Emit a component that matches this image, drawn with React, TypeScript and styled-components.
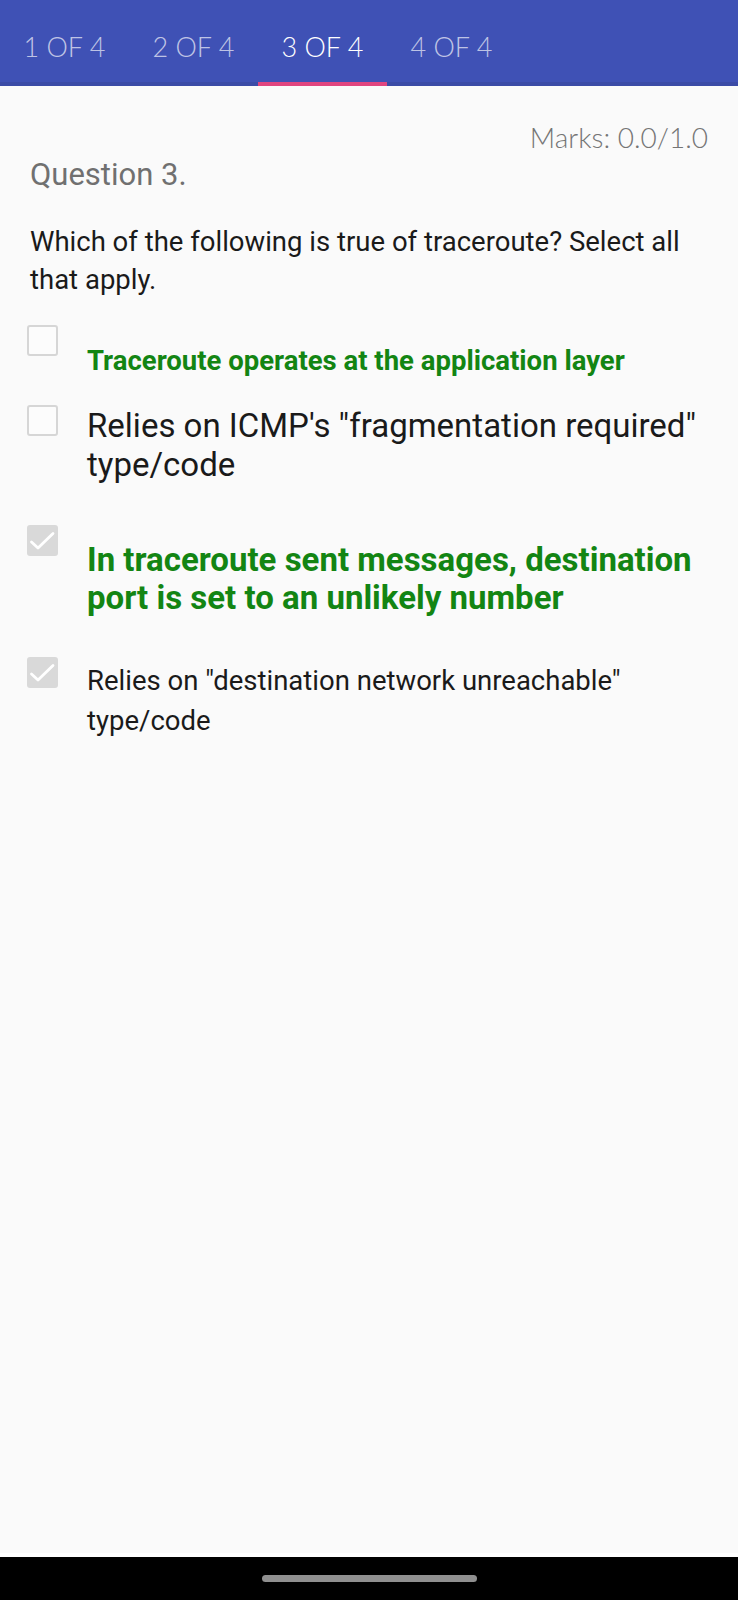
import React from "react";
import styled, { createGlobalStyle } from "styled-components";

const Global = createGlobalStyle`
  html, body { margin: 0; padding: 0; }
  body { background: #fafafa; font-family: Roboto, "Liberation Sans", sans-serif; }
  * { box-sizing: border-box; }
`;

const Page = styled.div`
  min-height: 100vh;
  display: flex;
  flex-direction: column;
  background: #fafafa;
`;

const Header = styled.header`
  height: 86px;
  background: #3f51b5;
  border-bottom: 4px solid #3b4ba6;
  display: flex;
  position: relative;
`;

const Tab = styled.div<{ $active?: boolean }>`
  width: 129px;
  display: flex;
  justify-content: center;
  align-items: center;
  padding-top: 10px;
  font-family: Lato, "Open Sans", sans-serif;
  font-weight: 300;
  font-size: 27px;
  color: ${(p) => (p.$active ? "#ffffff" : "rgba(255,255,255,0.68)")};
  position: relative;
`;

const Indicator = styled.span`
  position: absolute;
  left: 0;
  right: 0;
  bottom: -4px;
  height: 4px;
  background: #e0457f;
`;

const Content = styled.main`
  flex: 1;
  padding: 0 30px;
`;

const Marks = styled.div`
  margin-top: 34px;
  text-align: right;
  font-family: Lato, "Open Sans", sans-serif;
  font-weight: 300;
  font-size: 28px;
  line-height: 34px;
  color: #757575;
`;

const QuestionNo = styled.div`
  margin-top: 4px;
  font-size: 31px;
  line-height: 34px;
  color: #707070;
`;

const QuestionText = styled.div`
  margin-top: 31px;
  font-size: 27.5px;
  line-height: 38px;
  color: #1a1a1a;
`;

const Option = styled.div<{ $mt: number }>`
  display: flex;
  align-items: flex-start;
  margin-top: ${(p) => p.$mt}px;
`;

const Box = styled.div<{ $checked?: boolean }>`
  flex: none;
  width: 31px;
  height: 31px;
  margin-left: -3px;
  border-radius: 3px;
  border: ${(p) => (p.$checked ? "none" : "2px solid #d6d6d6")};
  background: ${(p) => (p.$checked ? "#d9d9d9" : "#fcfcfc")};
  display: flex;
  align-items: center;
  justify-content: center;
`;

const Label = styled.div<{ $pt: number; $size: number; $lh: number; $correct?: boolean }>`
  flex: 1;
  margin-left: 29px;
  margin-right: -24px;
  padding-top: ${(p) => p.$pt}px;
  font-size: ${(p) => p.$size}px;
  line-height: ${(p) => p.$lh}px;
  font-weight: ${(p) => (p.$correct ? 700 : 400)};
  color: ${(p) => (p.$correct ? "#138513" : "#1a1a1a")};
`;

const NavBar = styled.div`
  height: 47px;
  background: #000;
  border-top: 4px solid #ffffff;
  display: flex;
  justify-content: center;
  padding-top: 18px;
`;

const Handle = styled.div`
  width: 215px;
  height: 7px;
  border-radius: 4px;
  background: #8f8f8f;
`;

const Check = () => (
  <svg width="31" height="31" viewBox="0 0 31 31">
    <path d="M4.5 17 L11 23 L26 8.5" fill="none" stroke="#ffffff" strokeWidth="2.8" strokeLinecap="round" strokeLinejoin="round" />
  </svg>
);

const options = [
  { text: "Traceroute operates at the application layer", checked: false, correct: true, mt: 26, pt: 19, size: 27.5, lh: 34 },
  { text: 'Relies on ICMP\'s "fragmentation required" type/code', checked: false, correct: false, mt: 27, pt: 1, size: 33, lh: 39 },
  { text: "In traceroute sent messages, destination port is set to an unlikely number", checked: true, correct: true, mt: 41, pt: 16, size: 33, lh: 38 },
  { text: 'Relies on "destination network unreachable" type/code', checked: true, correct: false, mt: 40, pt: 4, size: 27.5, lh: 40 },
];

export default function App() {
  return (
    <Page>
      <Global />
      <Header>
        {["1 OF 4", "2 OF 4", "3 OF 4", "4 OF 4"].map((t, i) => (
          <Tab key={t} $active={i === 2}>
            {t}
            {i === 2 && <Indicator />}
          </Tab>
        ))}
      </Header>
      <Content>
        <Marks>Marks: 0.0/1.0</Marks>
        <QuestionNo>Question 3.</QuestionNo>
        <QuestionText>Which of the following is true of traceroute? Select all that apply.</QuestionText>
        {options.map((o) => (
          <Option key={o.text} $mt={o.mt}>
            <Box $checked={o.checked}>{o.checked && <Check />}</Box>
            <Label $pt={o.pt} $size={o.size} $lh={o.lh} $correct={o.correct}>
              {o.text}
            </Label>
          </Option>
        ))}
      </Content>
      <NavBar>
        <Handle />
      </NavBar>
    </Page>
  );
}
